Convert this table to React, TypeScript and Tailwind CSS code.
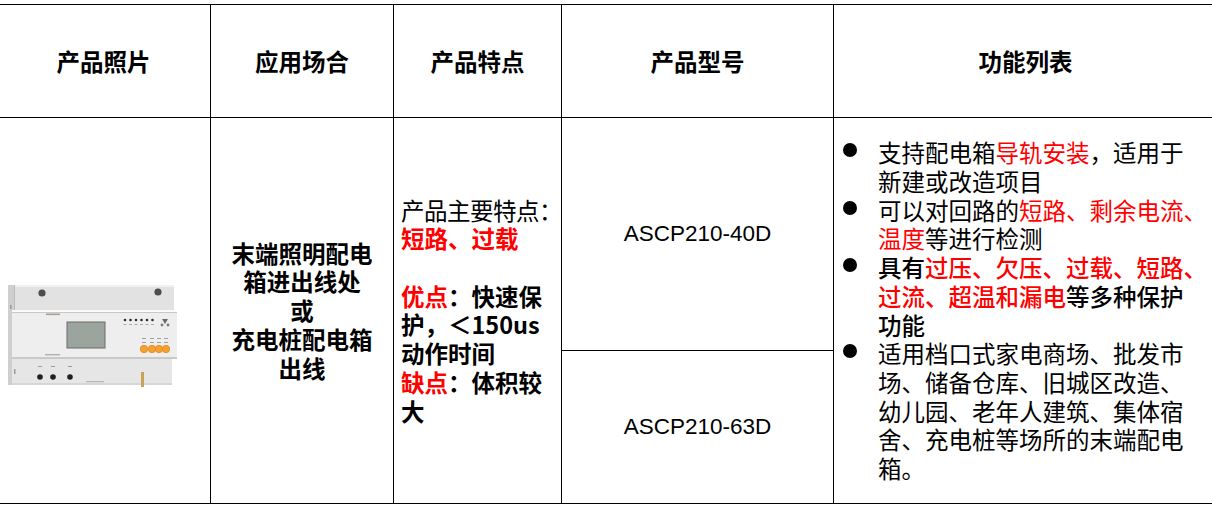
const cjk = { fontFamily: "'Noto Sans CJK SC', 'Noto Sans', sans-serif" };

const DeviceImage = () => (
  <svg width="190" height="120" viewBox="0 0 190 120">
    {/* top module */}
    <rect x="8" y="10" width="166" height="27" fill="#e2e2e2" />
    <rect x="8" y="10" width="166" height="2" fill="#f0f0f0" />
    <rect x="8" y="10" width="6" height="100" fill="#cfcfcf" />
    <rect x="14" y="10" width="1" height="100" fill="#bdbdbd" />
    <circle cx="42" cy="18" r="3.6" fill="#4d4d4d" />
    <circle cx="158" cy="17" r="3.6" fill="#4d4d4d" />
    <rect x="10" y="30" width="1.5" height="4" fill="#9a9a9a" />
    {/* front panel */}
    <rect x="12" y="35" width="165" height="48" fill="#eeeeee" />
    <rect x="12" y="35" width="165" height="2" fill="#fafafa" />
    <rect x="12" y="37" width="165" height="1" fill="#c8c8c8" />
    <rect x="12" y="82" width="165" height="2" fill="#c9c9c9" />
    <rect x="46" y="38.5" width="14" height="1.6" fill="#a99f90" />
    <rect x="67" y="47" width="38" height="26" fill="#9ca59d" stroke="#6a6a6a" strokeWidth="1" />
    {[125, 130.5, 136, 141.5, 147, 152.5].map((x) => (
      <g key={x}>
        <circle cx={x} cy="45" r="1.3" fill="#2e2e2e" />
        <rect x={x - 1.5} y="49" width="3" height="0.8" fill="#9c9c9c" />
      </g>
    ))}
    <path d="M162 44 L168 44 L165 49 Z" fill="#6a6a6a" />
    <circle cx="162" cy="50" r="1.4" fill="#7a7a7a" />
    <circle cx="168" cy="50" r="1.4" fill="#7a7a7a" />
    {[144, 152, 159, 166].map((x) => (
      <g key={x}>
        <rect x={x - 2} y="63" width="4" height="1" fill="#a0a0a0" />
        <rect x={x - 2} y="67" width="4" height="1" fill="#a0a0a0" />
        <circle cx={x} cy="74" r="3.7" fill="#f6a031" stroke="#e2861d" strokeWidth="0.8" />
      </g>
    ))}
    <rect x="45" y="79" width="15" height="1.4" fill="#b0b0b0" />
    {/* lower module */}
    <rect x="12" y="84" width="160" height="26" fill="#e6e6e6" />
    <rect x="12" y="108" width="160" height="2" fill="#d6d6d6" />
    <rect x="14" y="94" width="1.5" height="5" fill="#9a9a9a" />
    {[40, 53, 70].map((x) => (
      <g key={x}>
        <rect x={x - 2} y="91" width="4" height="1" fill="#9a9a9a" />
        <circle cx={x} cy="102" r="2.8" fill="#1f1f1f" />
      </g>
    ))}
    <rect x="86" y="106" width="18" height="1.2" fill="#b5b5b5" />
    <rect x="141" y="97" width="3" height="15" fill="#c9a25a" />
  </svg>
);

const Red = ({ children }: { children: React.ReactNode }) => (
  <span className="text-[#ff0000]">{children}</span>
);

const Bullet = ({ lines, bold }: { lines: React.ReactNode[]; bold?: boolean }) => (
  <div className="flex">
    <div className="w-[44px] shrink-0 pl-[9px] pt-[5px]">
      <div className="w-[14px] h-[14px] rounded-full bg-black" />
    </div>
    <div className={bold ? "font-medium" : ""}>
      {lines.map((l, i) => (
        <div key={i} className="whitespace-nowrap">{l}</div>
      ))}
    </div>
  </div>
);

export default function App() {
  const head = "flex items-center justify-center border-r border-b border-black h-[113px] text-[23.5px] font-semibold text-black";

  return (
    <div className="w-[1212px] h-[508px] overflow-hidden bg-white" style={cjk}>
      <div className="mt-[4px] ml-[-4px] w-[1221px] border-t border-l border-black grid grid-cols-[214px_183px_168px_272px_384px] text-[23.5px] leading-[28.7px]">
        <div className={head}>产品照片</div>
        <div className={head}>应用场合</div>
        <div className={head}>产品特点</div>
        <div className={head}>产品型号</div>
        <div className={head}>功能列表</div>

        {/* photo */}
        <div className="border-r border-b border-black h-[386px] pl-[3px] pt-[157px]">
          <DeviceImage />
        </div>

        {/* application */}
        <div className="border-r border-b border-black h-[386px] flex flex-col items-center justify-center text-center font-bold">
          <div>末端照明配电</div>
          <div>箱进出线处</div>
          <div>或</div>
          <div>充电桩配电箱</div>
          <div>出线</div>
        </div>

        {/* features */}
        <div className="border-r border-b border-black h-[386px] flex flex-col justify-center pl-[7px] whitespace-nowrap">
          <div className="tracking-[-0.5px]">产品主要特点：</div>
          <div className="font-bold text-[#ff0000]">短路、过载</div>
          <div className="h-[28.7px]" />
          <div className="font-bold"><Red>优点</Red>：快速保</div>
          <div className="font-bold">护，＜150us</div>
          <div className="font-bold">动作时间</div>
          <div className="font-bold"><Red>缺点</Red>：体积较</div>
          <div className="font-bold">大</div>
        </div>

        {/* models */}
        <div className="border-r border-b border-black h-[386px] flex flex-col" style={{ fontFamily: "'Liberation Sans', Arial, sans-serif" }}>
          <div className="h-[233px] border-b border-black flex items-center justify-center text-[22.5px]">ASCP210-40D</div>
          <div className="flex-1 flex items-center justify-center text-[22.5px]">ASCP210-63D</div>
        </div>

        {/* functions */}
        <div className="border-r border-b border-black h-[386px] flex flex-col justify-center">
          <Bullet lines={[<>支持配电箱<Red>导轨安装</Red>，适用于</>, "新建或改造项目"]} />
          <Bullet lines={[<>可以对回路的<Red>短路、剩余电流、</Red></>, <><Red>温度</Red>等进行检测</>]} />
          <Bullet
            bold
            lines={[<>具有<Red>过压、欠压、过载、短路、</Red></>, <><Red>过流、超温和漏电</Red>等多种保护</>, "功能"]}
          />
          <Bullet
            lines={["适用档口式家电商场、批发市", "场、储备仓库、旧城区改造、", "幼儿园、老年人建筑、集体宿", "舍、充电桩等场所的末端配电", "箱。"]}
          />
        </div>
      </div>
    </div>
  );
}
